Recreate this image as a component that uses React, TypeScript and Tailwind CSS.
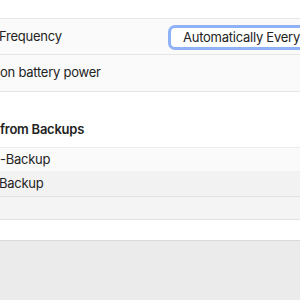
import React from "react";

export default function App() {
  const font = { fontFamily: "Inter, 'Noto Sans', sans-serif" };
  return (
    <div className="w-[300px] h-[300px] overflow-hidden bg-[#ebebeb] text-[13px] tracking-[-0.25px] text-[#232323]" style={font}>
      <div className="bg-white">
        <div className="h-[18px]" />
        <div className="border-t border-[#e6e6e6] bg-[#fafafa] h-[36px] flex items-center justify-between">
          <span className="ml-[-1px]">Frequency</span>
          <div className="ml-auto mr-[-40px] mt-[2px] w-[172px] h-[25px] rounded-[7px] border-[3px] border-[#8fb1f7] bg-white flex items-center pl-[12px] whitespace-nowrap">
            Automatically Every
          </div>
        </div>
        <div className="border-t border-[#e6e6e6] bg-[#fafafa] h-[37px] flex items-center">
          <span>on battery power</span>
        </div>
        <div className="border-t border-[#e6e6e6] h-[56px] flex items-end pb-[8px]">
          <span className="font-semibold">from Backups</span>
        </div>
        <div className="border-t border-[#ececec] bg-[#fafafa] h-[24px] flex items-center">
          <span>-Backup</span>
        </div>
        <div className="bg-[#f2f2f2] h-[25px] flex items-center">
          <span className="ml-[-1px]">Backup</span>
        </div>
        <div className="border-t border-[#e3e3e3] bg-[#f4f4f4] h-[23px]" />
        <div className="border-t border-[#e3e3e3] h-[21px]" />
      </div>
      <div className="border-t border-[#dadada] h-[60px] bg-[#ebebeb]" />
    </div>
  );
}
